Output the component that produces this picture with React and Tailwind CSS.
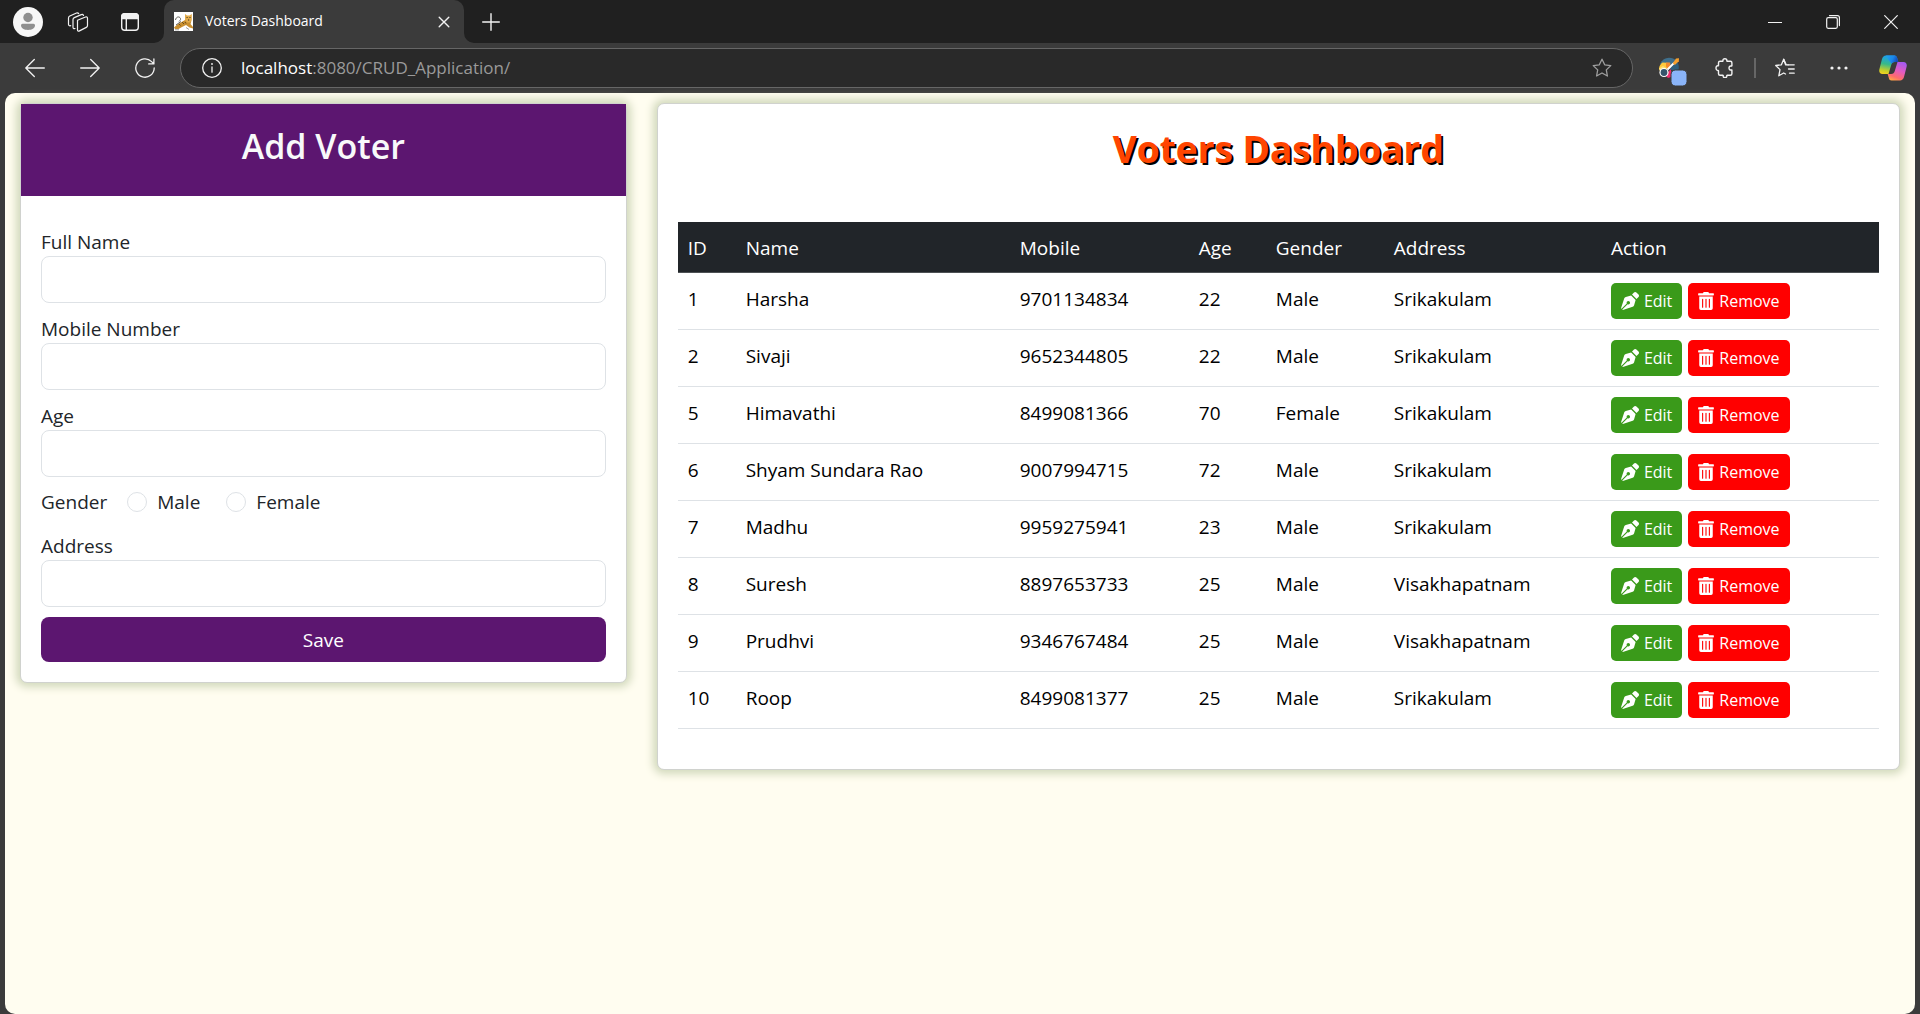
import React, { useState } from "react";
import { FaPenNib, FaTrashAlt } from "react-icons/fa";

const VOTERS = [
  { id: 1, name: "Harsha", mobile: "9701134834", age: 22, gender: "Male", address: "Srikakulam" },
  { id: 2, name: "Sivaji", mobile: "9652344805", age: 22, gender: "Male", address: "Srikakulam" },
  { id: 5, name: "Himavathi", mobile: "8499081366", age: 70, gender: "Female", address: "Srikakulam" },
  { id: 6, name: "Shyam Sundara Rao", mobile: "9007994715", age: 72, gender: "Male", address: "Srikakulam" },
  { id: 7, name: "Madhu", mobile: "9959275941", age: 23, gender: "Male", address: "Srikakulam" },
  { id: 8, name: "Suresh", mobile: "8897653733", age: 25, gender: "Male", address: "Visakhapatnam" },
  { id: 9, name: "Prudhvi", mobile: "9346767484", age: 25, gender: "Male", address: "Visakhapatnam" },
  { id: 10, name: "Roop", mobile: "8499081377", age: 25, gender: "Male", address: "Srikakulam" },
];

const COLUMNS = [
  { title: "ID", width: "w-[58px]" },
  { title: "Name", width: "w-[274px]" },
  { title: "Mobile", width: "w-[179px]" },
  { title: "Age", width: "w-[77px]" },
  { title: "Gender", width: "w-[118px]" },
  { title: "Address", width: "w-[217px]" },
  { title: "Action", width: "w-[278px]" },
];

/* Thin line icon used by the browser frame */
function Line({ size = 20, width = 1.3, children, className = "text-[#f2f2f2]" }) {
  return (
    <svg
      width={size}
      height={size}
      viewBox={`0 0 ${size} ${size}`}
      fill="none"
      stroke="currentColor"
      strokeWidth={width}
      strokeLinecap="round"
      strokeLinejoin="round"
      className={className}
      aria-hidden="true"
    >
      {children}
    </svg>
  );
}

function FrameButton({ label, className = "w-[54px]", children }) {
  return (
    <button type="button" aria-label={label} className={`flex h-full shrink-0 items-center justify-center ${className}`}>
      {children}
    </button>
  );
}

const STAR = "M10 1.2l2.7 5.6 6.1.8-4.5 4.3 1.1 6.1-5.4-3-5.4 3 1.1-6.1L1.2 7.600l6.1-.8z";

function Favicon() {
  return (
    <svg width="19" height="19" viewBox="0 0 19 19" aria-hidden="true">
      <rect width="19" height="19" fill="#fff" />
      <path d="M0 15.500L4 12l4.500-2.500L11 8l6.500.5-1 3.500 2.500 3v1.500l-3.500-1-3.500-2.500-4 2-3.500 2L1 17z" fill="#c98f2f" />
      <path d="M11 2l2 1.500h2.500L17.800 2v6l-1.800 2.500h-3L11 8z" fill="#e3ac4b" />
      <path d="M1.500 8C2 4.500 5.500 4 6.500 6.500c.5 1.500-1 2-1.500 3M2 13l5-3.500" stroke="#55524d" strokeWidth=".9" fill="none" />
      <path d="M8 10l2 2M5 12l1.500 1.500M11 10l1 1.500" stroke="#5b431b" strokeWidth=".9" />
      <path d="M12.600 5.500h1M15.500 5.500h1M14 8h1.200" stroke="#222" strokeWidth=".9" />
      <path d="M1 17.800h4M12 15.500l3 2" stroke="#777" strokeWidth=".7" />
    </svg>
  );
}

function PaletteIcon() {
  return (
    <svg width="30" height="30" viewBox="0 0 30 30" aria-hidden="true">
      <path d="M2 7C4 3 7 .8 11 .8c3 0 5.500 1 7.500 3L11 11z" fill="#3f6f8c" />
      <path d="M11 10l8.500-5c1.300 2.500 1.700 5.500 1 8H13z" fill="#2f5f7d" />
      <path d="M1 12c0-3 1.500-5 3.500-6.500L12 6l-2 5-6 4z" fill="#ffc93c" />
      <path d="M1 11.500L5 9l3 2-6 3.500z" fill="#ffe27a" />
      <path d="M8 5.500h4l1 5-3 2-2-3z" fill="#f28a2e" />
      <path d="M7 18l6-6v8l-3 1z" fill="#ee2a6b" />
      <circle cx="6" cy="15.500" r="4.600" fill="#fff" />
      <circle cx="6" cy="15.500" r="3.400" fill="#35546b" />
      <path d="M9.500 12.500L16 6" stroke="#fff" strokeWidth="1.800" />
      <path d="M14.800 6.200L18 1.500l3-.3-.2 3-4 3.800z" fill="#f7a12f" />
      <rect x="13" y="13" width="16" height="16" rx="4.500" fill="#8ab4f8" stroke="#3b3b3b" />
    </svg>
  );
}

function CopilotIcon() {
  return (
    <svg width="28" height="26" viewBox="0 0 28 26" aria-hidden="true">
      <defs>
        <linearGradient id="cpTop" x1="0" y1="0" x2="1" y2="0.3">
          <stop offset="0" stopColor="#1fa5ee" />
          <stop offset="0.6" stopColor="#1987ea" />
          <stop offset="1" stopColor="#1547b8" />
        </linearGradient>
        <linearGradient id="cpLeft" x1="0.4" y1="0" x2="0.2" y2="1">
          <stop offset="0" stopColor="#1b9df0" />
          <stop offset="0.45" stopColor="#37b98a" />
          <stop offset="0.8" stopColor="#c5cf2a" />
          <stop offset="1" stopColor="#f7d21e" />
        </linearGradient>
        <linearGradient id="cpRight" x1="0.7" y1="0" x2="0.3" y2="1">
          <stop offset="0" stopColor="#a55af0" />
          <stop offset="0.45" stopColor="#e35bc0" />
          <stop offset="0.8" stopColor="#ff6b6b" />
          <stop offset="1" stopColor="#ffa24a" />
        </linearGradient>
      </defs>
      <path d="M7 .5h8.500c1.500 0 2.200 1 2.600 2.300L19.300 7h-3.500c-2 0-3 1-3.600 3L9.500 19H3.500C.8 19-.2 17 .4 14.300L3 4C3.700 1.700 5 .5 7 .5z" fill="url(#cpLeft)" />
      <path d="M7 .5h8.500c1.500 0 2.200 1 2.600 2.300L19.300 7h-3.500c-1.500 0-2.500.6-3.200 1.700L10 5.500z" fill="url(#cpTop)" />
      <path d="M21 25.500h-8.500c-1.500 0-2.200-1-2.600-2.300L8.700 19h3.500c2 0 3-1 3.600-3L18.500 7h6c2.700 0 3.700 2 3.100 4.700L25 22c-.7 2.300-2 3.500-4 3.500z" fill="url(#cpRight)" />
    </svg>
  );
}

function TabStrip() {
  return (
    <div className="flex h-[43px] items-stretch bg-[#202020]">
      <div className="mr-[7px] flex items-stretch pl-[3px]">
        <FrameButton label="Profile" className="w-[50px]">
          <svg width="30" height="30" viewBox="0 0 30 30" aria-hidden="true">
            <circle cx="15" cy="15" r="15" fill="#f7f7f7" />
            <circle cx="15" cy="10.500" r="4.700" fill="#8f8f8f" />
            <path d="M9.500 16.800h11a1.500 1.500 0 0 1 1.500 1.500c0 3-3 4.700-7 4.700s-7-1.700-7-4.700a1.500 1.500 0 0 1 1.500-1.500z" fill="#8f8f8f" />
          </svg>
        </FrameButton>
        <FrameButton label="Workspaces" className="w-[50px]">
          <Line size={22} width={1.2}>
            <path d="M10.500 9.200l8-3.200c1.200-.4 2 .2 2 1.200v7.300c0 .9-.4 1.500-1.200 1.900l-6.800 3.500c-1.200.6-2 .1-2-1z" />
            <path d="M8 17.500c-1.200.4-2-.2-2-1.200V8.600c0-1 .4-1.600 1.300-2l7-3c1-.4 1.800-.1 2.200.8" />
            <path d="M3.700 14.700C2.300 15 1.500 14.500 1.500 13.300V7c0-1 .4-1.600 1.300-2l6.700-3c1-.4 1.800-.1 2.200.6" />
          </Line>
        </FrameButton>
        <FrameButton label="Tab actions" className="w-[54px]">
          <Line width={1.4}>
            <rect x="1.700" y="1.700" width="16.600" height="16.600" rx="3" />
            <path d="M1.700 6.500V4.700a3 3 0 0 1 3-3h10.600a3 3 0 0 1 3 3v1.800z" fill="currentColor" />
            <path d="M6.300 6.500v11.500" />
          </Line>
        </FrameButton>
      </div>
      <div className="relative flex w-[300px] items-center rounded-t-[10px] bg-[#3b3b3b] pl-[10px]">
        <svg className="absolute bottom-0 -left-[10px]" width="10" height="10" aria-hidden="true">
          <path d="M10 0v10H0A10 10 0 0 0 10 0z" fill="#3b3b3b" />
        </svg>
        <svg className="absolute -right-[10px] bottom-0" width="10" height="10" aria-hidden="true">
          <path d="M0 0v10h10A10 10 0 0 1 0 0z" fill="#3b3b3b" />
        </svg>
        <Favicon />
        <span className="ml-3 flex-1 pb-[2px] text-[14px] leading-5 text-white">Voters Dashboard</span>
        <FrameButton label="Close tab" className="w-10">
          <Line size={12} width={1.4}>
            <path d="M1.200 1.200l9.600 9.600M10.800 1.200L1.200 10.800" />
          </Line>
        </FrameButton>
      </div>
      <FrameButton label="New tab" className="w-[54px]">
        <Line size={18} width={1.4}>
          <path d="M9 .7v16.600M.7 9h16.600" />
        </Line>
      </FrameButton>
      <div className="ml-auto flex items-stretch">
        <FrameButton label="Minimize" className="w-[58px]">
          <Line size={14} width={1.2}>
            <path d="M.5 7.500h13" />
          </Line>
        </FrameButton>
        <FrameButton label="Restore" className="w-[58px]">
          <Line size={14} width={1.2}>
            <rect x=".7" y="2.700" width="10.600" height="10.600" rx="1.500" />
            <path d="M3.500.7h8c1.200 0 1.900.7 1.900 1.900v8" />
          </Line>
        </FrameButton>
        <FrameButton label="Close" className="w-[58px]">
          <Line size={14} width={1.2}>
            <path d="M.7.7l12.600 12.600M13.300.7L.7 13.300" />
          </Line>
        </FrameButton>
      </div>
    </div>
  );
}

function Toolbar() {
  return (
    <div className="flex h-[50px] items-stretch bg-[#3b3b3b] pl-[7px]">
      <FrameButton label="Back" className="w-[55px]">
        <Line>
          <path d="M19.300 10H.9M9.300 1.500L.8 10l8.500 8.500" />
        </Line>
      </FrameButton>
      <FrameButton label="Forward" className="w-[55px]">
        <Line>
          <path d="M.7 10h18.400M10.700 1.500l8.500 8.500-8.500 8.500" />
        </Line>
      </FrameButton>
      <FrameButton label="Refresh" className="w-[55px]">
        <Line>
          <path d="M19.200 10a9.200 9.200 0 1 1-2.600-6.400l1.900 2M18.900.9v5h-5.200" />
        </Line>
      </FrameButton>
      <div className="mr-[11px] ml-2 flex h-[40px] flex-1 items-center self-center rounded-full border border-[#666] bg-[#292929] pr-[20px] pl-[21px]">
        <button type="button" aria-label="View site information">
          <Line>
            <circle cx="10" cy="10" r="9.300" />
            <path d="M10 9v5.200" />
            <path d="M10 6v.1" strokeWidth="1.800" />
          </Line>
        </button>
        <div role="textbox" aria-label="Address bar" className="ml-[19px] flex-1 text-[17px] leading-6 text-[#9a9a9a]">
          <span className="text-white">localhost</span>:8080/CRUD_Application/
        </div>
        <button type="button" aria-label="Add to favorites">
          <Line className="text-[#9f9f9f]">
            <path d={STAR} />
          </Line>
        </button>
      </div>
      <FrameButton label="Color picker">
        <span className="pt-[7px] pl-1">
          <PaletteIcon />
        </span>
      </FrameButton>
      <FrameButton label="Extensions">
        <Line width={1.400}>
          <path d="M5 3.200h2.700c.3 0 .4-.3.300-.6C7.700 1.500 8.600.7 9.900.7s2.200.8 1.900 1.900c-.1.300 0 .6.300.6h3.300c.9 0 1.500.6 1.500 1.500v3c0 .3-.3.4-.6.300-1.300-.3-2.300.6-2.300 2s1 2.300 2.300 2c.3-.1.6 0 .6.300v3.500c0 .9-.6 1.500-1.500 1.500h-3.200c-.3 0-.5.300-.4.600.2 1-.6 1.700-1.800 1.700s-2-.7-1.800-1.700c.1-.3-.1-.6-.4-.6H5c-.9 0-1.500-.6-1.500-1.500v-3c0-.3-.2-.5-.5-.4-1.100.2-2-.8-2-2.300s.9-2.500 2-2.300c.3.100.5-.1.500-.4V4.700c0-.9.600-1.500 1.500-1.500z" />
        </Line>
      </FrameButton>
      <span className="mx-[2px] h-5 w-[2px] self-center bg-[#666]" />
      <FrameButton label="Favorites">
        <Line>
          <path d="M13 6.800h6.200M13.500 11h5.700M14.500 15.200h4.700" />
          <path d="M10.600 6.800L8.700 1.300 6.400 6.800l-5.700.7 4.300 4.100-1.200 6.200 4.900-2.800 1.800 1" />
          <path d="M8.700 1.300l2.500 5.500h2" />
        </Line>
      </FrameButton>
      <FrameButton label="Settings and more">
        <svg width="18" height="4" viewBox="0 0 18 4" fill="#f2f2f2" aria-hidden="true">
          <circle cx="2" cy="2" r="1.600" />
          <circle cx="9" cy="2" r="1.600" />
          <circle cx="16" cy="2" r="1.600" />
        </svg>
      </FrameButton>
      <FrameButton label="Copilot">
        <CopilotIcon />
      </FrameButton>
    </div>
  );
}

function Field({ id, label }) {
  return (
    <div className="mb-[10px]">
      <label htmlFor={id} className="block pt-[2px] leading-[28px]">
        {label}
      </label>
      <input id={id} name={id} type="text" className="block h-[47px] w-full rounded-lg border border-[#dee2e6] bg-white px-[15px]" />
    </div>
  );
}

function GenderOption({ value, checked, onChange }) {
  return (
    <label className="flex items-center gap-[10px]">
      <input
        type="radio"
        name="gender"
        value={value}
        checked={checked}
        onChange={() => onChange(value)}
        className="size-5 appearance-none rounded-full border border-[#dee2e6] bg-white checked:border-[6px] checked:border-[#5c1670]"
      />
      {value}
    </label>
  );
}

const CARD = "rounded-[7px] border border-[#d0d2ce] bg-white shadow-[0_0_8px_4px_#d2d9bc]";

function AddVoter() {
  const [gender, setGender] = useState("");
  return (
    <section className={CARD}>
      <header className="bg-[#5c1670] px-5 pt-[21px] pb-[29px]">
        <h2 className="text-center text-[34px] leading-[42px] font-semibold text-[#f8f9fa]">Add Voter</h2>
      </header>
      <form className="px-5 pt-[30px] pb-5 text-[#212529]" onSubmit={(e) => e.preventDefault()}>
        <Field id="fullname" label="Full Name" />
        <Field id="mobile" label="Mobile Number" />
        <Field id="age" label="Age" />
        <div role="radiogroup" aria-label="Gender" className="mb-[13px] flex items-center leading-[30px]">
          <span className="mr-5">Gender</span>
          <span className="mr-[26px]">
            <GenderOption value="Male" checked={gender === "Male"} onChange={setGender} />
          </span>
          <GenderOption value="Female" checked={gender === "Female"} onChange={setGender} />
        </div>
        <Field id="address" label="Address" />
        <button type="submit" className="block w-full rounded-lg bg-[#5c1670] pt-[9px] pb-[7px] leading-[29px] text-white">
          Save
        </button>
      </form>
    </section>
  );
}

function VotersTable() {
  return (
    <section className={`${CARD} px-5 pt-[21px] pb-10`}>
      <h1 className="mb-[49px] text-center text-[37px] leading-[48px] font-bold text-[#ff4500] [text-shadow:2px_2px_#000]">
        Voters Dashboard
      </h1>
      <table className="w-full table-fixed border-collapse text-left">
        <thead>
          <tr className="border-b border-[#4d5154] bg-[#212529] text-white">
            {COLUMNS.map((c) => (
              <th key={c.title} scope="col" className={`${c.width} px-[10px] pt-[11px] pb-[9px] leading-[30px] font-normal`}>
                {c.title}
              </th>
            ))}
          </tr>
        </thead>
        <tbody className="text-black">
          {VOTERS.map((v) => (
            <tr key={v.id} className="border-b border-[#dee2e6] align-top leading-[30px]">
              <td className="px-[10px] pt-[11px]">{v.id}</td>
              <td className="px-[10px] pt-[11px]">{v.name}</td>
              <td className="px-[10px] pt-[11px]">{v.mobile}</td>
              <td className="px-[10px] pt-[11px]">{v.age}</td>
              <td className="px-[10px] pt-[11px]">{v.gender}</td>
              <td className="px-[10px] pt-[11px]">{v.address}</td>
              <td className="p-[10px]">
                <div className="flex gap-[6px] text-[16px] leading-[36px] text-white">
                  <a href="#edit" className="flex items-center gap-[5px] rounded-[5px] bg-[#3a9a1a] px-[10px]">
                    <FaPenNib size={18} aria-hidden="true" />
                    Edit
                  </a>
                  <a href="#remove" className="flex items-center gap-[5px] rounded-[5px] bg-[#ff0000] px-[10px]">
                    <FaTrashAlt size={18} className="w-4" aria-hidden="true" />
                    Remove
                  </a>
                </div>
              </td>
            </tr>
          ))}
        </tbody>
      </table>
    </section>
  );
}

export default function App() {
  return (
    <div className="flex min-h-screen flex-col bg-[#3b3b3b] font-['Open_Sans','Noto_Sans',sans-serif] text-[19px]">
      <TabStrip />
      <Toolbar />
      <main className="mx-[5px] flex flex-1 items-start rounded-[10px] bg-[#fffdf0] pt-[10px] pb-8">
        <div className="w-1/3 px-[15px]">
          <AddVoter />
        </div>
        <div className="w-2/3 px-[15px]">
          <VotersTable />
        </div>
      </main>
    </div>
  );
}
